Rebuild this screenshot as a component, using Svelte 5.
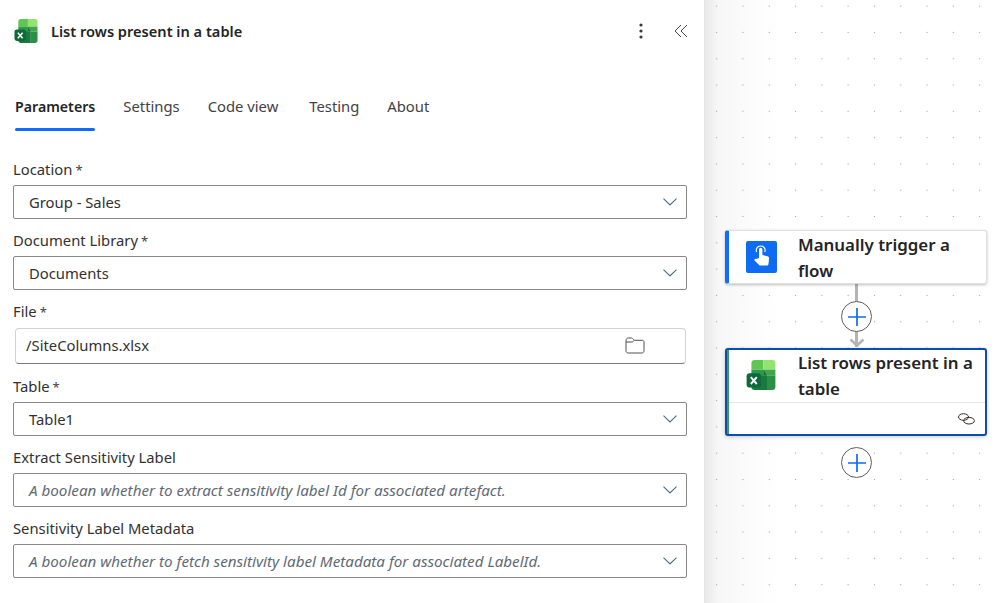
<script>
  const tabs = ['Parameters', 'Settings', 'Code view', 'Testing', 'About'];
  const fields = [
    { label: 'Location', req: true, value: 'Group - Sales' },
    { label: 'Document Library', req: true, value: 'Documents' },
    { label: 'File', req: true, value: '/SiteColumns.xlsx', kind: 'file' },
    { label: 'Table', req: true, value: 'Table1' },
    { label: 'Extract Sensitivity Label', value: 'A boolean whether to extract sensitivity label Id for associated artefact.', ph: true },
    { label: 'Sensitivity Label Metadata', value: 'A boolean whether to fetch sensitivity label Metadata for associated LabelId.', ph: true }
  ];
</script>

{#snippet excel(size)}
  <svg width={size} height={size} viewBox="0 0 24 25" class="xl">
    <path d="M4 2.500C4 1.100 5.100 0 6.500 0H14v8H4z" fill="#5fc751"/>
    <path d="M14 0h7.500C22.900 0 24 1.100 24 2.500V8H14z" fill="#92e36f"/>
    <path d="M4 8h10v9H4z" fill="#2c9a48"/>
    <path d="M14 8h10v5H14z" fill="#3fa64c"/>
    <path d="M14 8l3 5h-3z" fill="#17703a"/>
    <path d="M4 13h13v12H6.500C5.100 25 4 23.900 4 22.500z" fill="#1a7a3e"/>
    <path d="M17 13h7v9.500c0 1.400-1.100 2.500-2.500 2.500H17z" fill="#2b9046"/>
    <rect x="0" y="11" width="12" height="12" rx="2.600" fill="#0e6a3a"/>
    <path d="M3.500 14.200l5 5.800M8.500 14.200l-5 5.800" stroke="#fff" stroke-width="1.600" fill="none"/>
  </svg>
{/snippet}

{#snippet plus()}
  <div class="plus">
    <svg width="20" height="20" viewBox="0 0 20 20"><path d="M10 1v18M1 10h18" stroke="#0f6cf0" stroke-width="1.700"/></svg>
  </div>
{/snippet}

<div class="page">
  <aside class="panel">
    <header class="head">
      {@render excel(24)}
      <h1>List rows present in a table</h1>
      <svg class="dots" width="6" height="16" viewBox="0 0 6 16"><circle cx="3" cy="2" r="1.600"/><circle cx="3" cy="8" r="1.600"/><circle cx="3" cy="14" r="1.600"/></svg>
      <svg class="coll" width="14" height="14" viewBox="0 0 14 14"><path d="M7 1L1 7l6 6M13 1L7 7l6 6" fill="none" stroke="#4a4644" stroke-width="1"/></svg>
    </header>
    <nav class="tabs">
      {#each tabs as t, i}
        <span class="tab" class:on={i === 0}>{t}</span>
      {/each}
    </nav>
    <div class="form">
      {#each fields as f}
        <div class="field" class:isfile={f.kind === 'file'}>
          <div class="label">{f.label}{#if f.req}<span class="star">*</span>{/if}</div>
          <div class="box" class:file={f.kind === 'file'}>
            <span class="val" class:ph={f.ph}>{f.value}</span>
            {#if f.kind === 'file'}
              <svg class="folder" width="20" height="17" viewBox="0 0 20 17"><path d="M1 3.500C1 2.100 2 1 3.200 1h3.300c.8 0 1.300.6 2 1.500.4.500.8.800 1.500.8h7.300c1 0 1.700.8 1.700 1.700v8.800c0 1.200-.9 2.200-2 2.200H3c-1.100 0-2-1-2-2.200zM1 5h6c1 0 1.500-.8 2-1.700" fill="none" stroke="#55514f" stroke-width="1"/></svg>
            {:else}
              <svg class="chev" width="14" height="8" viewBox="0 0 14 8"><path d="M.5.7L7 7l6.500-6.300" fill="none" stroke="#4a6a85" stroke-width="1.100"/></svg>
            {/if}
          </div>
        </div>
      {/each}
    </div>
  </aside>
  <main class="canvas">
    <div class="line l1"></div>
    <div class="line l2"></div>
    <svg class="arrow" width="16" height="10" viewBox="0 0 16 10"><path d="M1.500 1.500L8 7.500l6.500-6" fill="none" stroke="#b4b4b4" stroke-width="2.600"/></svg>
    <div class="card c1">
      <div class="cardrow">
        <div class="trigger">
          <svg width="22" height="24" viewBox="0 0 22 24"><path d="M8 13V4.500a1.700 1.700 0 0 1 3.400 0V10l5 1.200c1.200.3 1.800 1.200 1.700 2.300l-.6 5.500c-.1 1-.9 1.600-1.800 1.600H9.500c-.7 0-1.300-.3-1.700-.9L3.500 15.500c-.6-.9.700-2.300 1.800-1.500z" fill="#fff"/><path d="M5.700 7A4.200 4.200 0 0 1 9.700 1a4.200 4.200 0 0 1 4 6" fill="none" stroke="#fff" stroke-width="1.100"/></svg>
        </div>
        <div class="title">Manually trigger a flow</div>
      </div>
    </div>
    <div class="pos p1">{@render plus()}</div>
    <div class="card c2">
      <div class="cardrow">
        <div class="xlwrap">{@render excel(30)}</div>
        <div class="title">List rows present in a table</div>
      </div>
      <div class="foot">
        <svg width="17" height="12" viewBox="0 0 17 12"><g fill="none" stroke="#33302e" stroke-width="1"><ellipse cx="5.500" cy="4" rx="5" ry="3.300"/><ellipse cx="11" cy="7.700" rx="5.400" ry="3.300"/></g></svg>
      </div>
    </div>
    <div class="pos p2">{@render plus()}</div>
  </main>
</div>

<style>
  :global(body) { margin: 0; background: #fff; }
  .page {
    display: flex;
    width: 998px;
    height: 603px;
    overflow: hidden;
    font-family: "Noto Sans", "Open Sans", sans-serif;
    color: #242424;
  }
  .panel {
    width: 705px;
    flex: none;
    box-sizing: border-box;
    border-right: 1px solid #e4e4e4;
    background: #fff;
  }
  .head {
    display: flex;
    align-items: center;
    height: 62px;
    padding: 0 15px 0 14px;
  }
  .xl { flex: none; display: block; }
  h1 {
    margin: 0 0 0 13px;
    font-size: 14.6px;
    font-weight: 600;
    flex: 1;
    color: #242424;
  }
  .dots { fill: #3b3a39; margin-right: 30px; }
  .coll { margin-right: 1px; }
  .tabs {
    display: flex;
    gap: 28px;
    height: 69px;
    padding: 0 0 0 15px;
    box-sizing: border-box;
  }
  .tab {
    height: 69px;
    box-sizing: border-box;
    padding-top: 32px;
    font-size: 14.8px;
    line-height: 24px;
    color: #424242;
    position: relative;
  }
  .tab:nth-child(3) { margin-right: 3px; }
  .tab.on { padding-top: 33px; font-size: 14.2px; font-weight: 600; color: #242424; }
  .tab.on::after {
    content: "";
    position: absolute;
    left: 0; right: 0; bottom: 0;
    height: 3px;
    border-radius: 2px;
    background: #0f6cff;
  }
  .form { padding: 28px 17px 0 13px; }
  .field { margin-bottom: 11px; }
  .field.isfile { margin-bottom: 12px; }
  .label {
    font-size: 14.8px;
    line-height: 20px;
    height: 26px;
    color: #323130;
  }
  .star { margin-left: 3px; font-size: 13px; color: #424242; }
  .box {
    height: 34px;
    box-sizing: border-box;
    border: 1px solid #8a8886;
    border-radius: 2px;
    display: flex;
    align-items: center;
    padding: 0 9px 0 15px;
    justify-content: space-between;
  }
  .box.file {
    height: 36px;
    margin: 1px 1px 0 2px;
    border-color: #d1d1d1;
    border-bottom-color: #7a7a7a;
    border-radius: 4px;
    padding: 0 40px 2px 10px;
  }
  .val { font-size: 14.8px; color: #323130; }
  .ph { font-size: 15.2px; font-style: italic; color: #5f6a75; }
  .canvas {
    flex: 1;
    position: relative;
    background-image:
      radial-gradient(circle at center, #a9a9a9 0, #a9a9a9 .7px, transparent 1px),
      linear-gradient(90deg, #e9e9e9 0, #f7f7f7 14px, #fbfbfb 40px, #fff 80px);
    background-size: 26.3px 26.3px, 100% 100%;
    background-position: -1.500px -7px, 0 0;
  }
  .card {
    position: absolute;
    left: 20px;
    width: 262px;
    box-sizing: border-box;
    background: #fff;
    border-radius: 3px;
  }
  .c1 {
    top: 230px;
    height: 54px;
    border: 1px solid #e0e0e0;
    border-left: 4px solid #0f6cff;
    box-shadow: 0 1px 3px rgba(0,0,0,.25);
  }
  .c2 {
    top: 348px;
    height: 88px;
    border: 2px solid #0b4eb0;
    box-shadow: 0 1px 4px rgba(0,0,0,.2);
    display: flex;
    flex-direction: column;
  }
  .c2::before {
    content: "";
    position: absolute;
    left: 0; top: 0; bottom: 0;
    width: 2px;
    background: #3c9a58;
  }
  .cardrow { display: flex; height: 52px; }
  .c1 .trigger {
    width: 31px;
    height: 32px;
    margin: 10px 21px 0 17px;
    border-radius: 2px;
    background: #0f6cf2;
    display: flex;
    align-items: center;
    justify-content: center;
    flex: none;
  }
  .xlwrap { margin: 10px 22px 0 19px; flex: none; }
  .title {
    font-size: 16.9px;
    font-weight: 600;
    line-height: 26px;
    color: #242424;
  }
  .c1 .title { margin-top: 1px; }
  .foot {
    flex: 1;
    border-top: 1px solid #e6e6e6;
    margin-left: 2px;
    display: flex;
    align-items: center;
    justify-content: flex-end;
    padding-right: 10px;
  }
  .line { position: absolute; left: 150px; width: 3px; background: #b4b4b4; }
  .l1 { top: 284px; height: 20px; }
  .l2 { top: 331px; height: 16px; }
  .arrow { position: absolute; left: 143.500px; top: 338px; }
  .pos { position: absolute; left: 136px; }
  .p1 { top: 301px; }
  .p2 { top: 447px; }
  .plus {
    width: 31px;
    height: 31px;
    box-sizing: border-box;
    border: 1px solid #605e5c;
    border-radius: 50%;
    background: #fff;
    display: flex;
    align-items: center;
    justify-content: center;
  }
</style>
